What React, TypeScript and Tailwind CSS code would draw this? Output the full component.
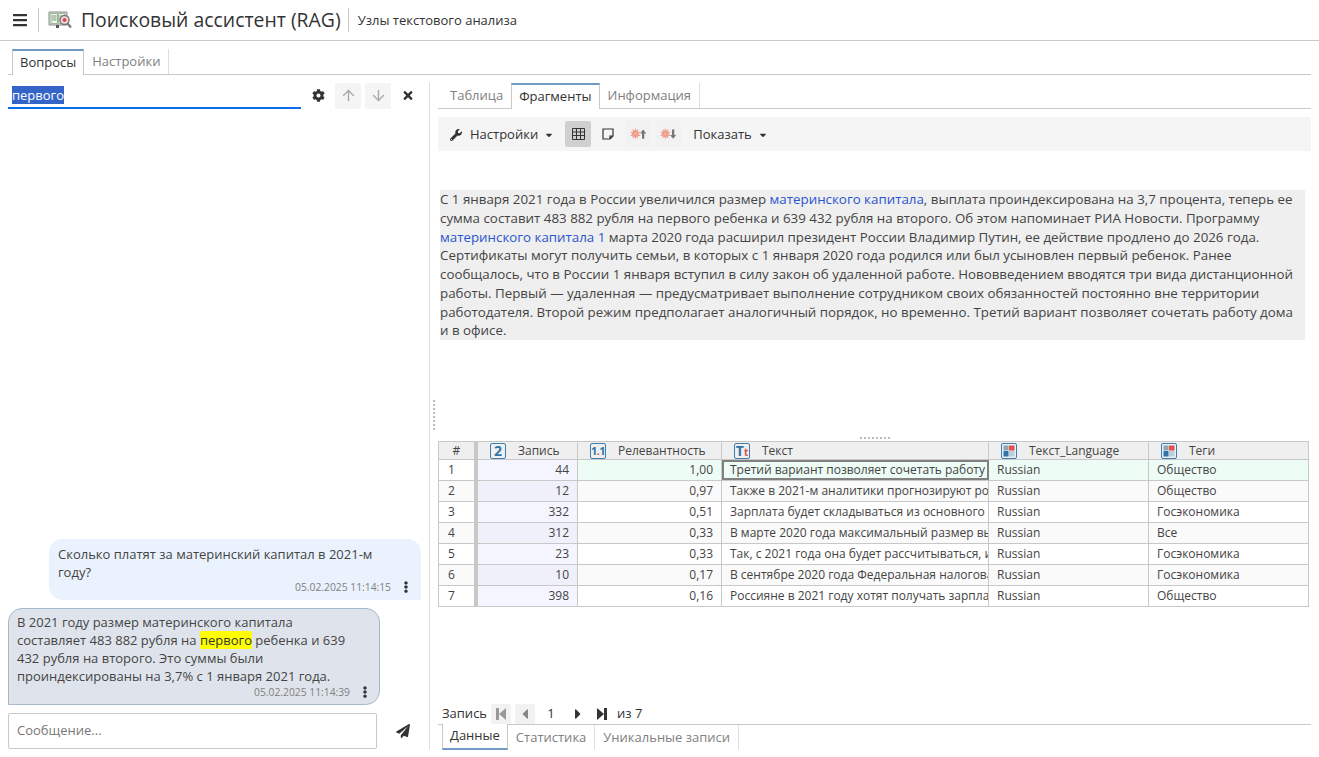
import { ArrowDown, ArrowUp } from "lucide-react";
import { FaBars, FaCog, FaTimes, FaWrench, FaPaperPlane, FaCaretDown, FaCaretLeft, FaCaretRight, FaEllipsisV } from "react-icons/fa";
import { ReactNode } from "react";

const rows = [
  ["1", "44", "1,00", "Третий вариант позволяет сочетать работу дома и в офисе.", "Russian", "Общество"],
  ["2", "12", "0,97", "Также в 2021-м аналитики прогнозируют рост зарплат в стране", "Russian", "Общество"],
  ["3", "332", "0,51", "Зарплата будет складываться из основного оклада и надбавок", "Russian", "Госэкономика"],
  ["4", "312", "0,33", "В марте 2020 года максимальный размер выплаты увеличился", "Russian", "Все"],
  ["5", "23", "0,33", "Так, с 2021 года она будет рассчитываться, исходя из дохода", "Russian", "Госэкономика"],
  ["6", "10", "0,17", "В сентябре 2020 года Федеральная налоговая служба сообщила", "Russian", "Госэкономика"],
  ["7", "398", "0,16", "Россияне в 2021 году хотят получать зарплату выше прежней", "Russian", "Общество"],
];

function Tab({ label, active, bottom, className }: { label: string; active?: boolean; bottom?: boolean; className?: string }) {
  if (active) {
    return (
      <div
        className={`h-[26px] px-[7px] flex items-center bg-white border-x border-[#c8c8c8] text-[#333] ${
          bottom ? "border-b-2 border-b-[#7399c6] -mt-px" : "border-t-2 border-t-[#7399c6] -mb-px"
        } ${className ?? ""}`}
      >
        {label}
      </div>
    );
  }
  return <div className="h-[25px] pl-[8px] pr-[8px] flex items-center border-r border-[#dedede] text-[#808080]">{label}</div>;
}

function ToolButton({ children, className }: { children: ReactNode; className?: string }) {
  return <div className={`w-[26px] h-[26px] rounded-[2px] flex items-center justify-center ${className ?? ""}`}>{children}</div>;
}

function ColumnIcon({ children }: { children: ReactNode }) {
  return (
    <span className="w-[16px] h-[16px] border border-[#3d7fb0] rounded-[2px] flex items-center justify-center text-[#2f74a8] font-bold leading-none">
      {children}
    </span>
  );
}

function ChartIcon() {
  return (
    <ColumnIcon>
      <svg width="12" height="12" viewBox="0 0 12 12">
        <rect x="0.5" y="0.5" width="5" height="5" fill="#8fa3b5" />
        <rect x="6" y="0.5" width="5.5" height="5" fill="#e2504a" />
        <rect x="0.5" y="6" width="5" height="5.5" fill="#2f74a8" />
        <rect x="6" y="6" width="5.5" height="5.5" fill="#b9cfe0" />
      </svg>
    </ColumnIcon>
  );
}

function HeaderCell({ icon, label, width }: { icon: ReactNode; label: string; width: string }) {
  return (
    <div className={`${width} h-full pl-[12px] flex items-center gap-[12px] border-r border-[#c8c8c8]`}>
      {icon}
      <span>{label}</span>
    </div>
  );
}

function Burst({ down }: { down?: boolean }) {
  return (
    <svg width="17" height="12.4" viewBox="0 0 22 16">
      <path
        d="M7 0l1.300 3.600L11 1.300 10.200 5l3.800-.2-3 2.700 3 2.700-3.800-.2.800 3.700-2.700-2.300L7 15l-1.300-3.600L3 13.700 3.800 10 0 10.200l3-2.700-3-2.700 3.800.2L3 1.300l2.700 2.300z"
        fill="#ee9c8c"
      />
      <circle cx="7" cy="7.500" r="1.800" fill="#f3b48a" />
      {down ? (
        <path d="M15.500 2h3v7H21l-4 5-4-5h2.500z" fill="#777" />
      ) : (
        <path d="M15.500 14h3V7H21l-4-5-4 5h2.500z" fill="#777" />
      )}
    </svg>
  );
}

function Kebab() {
  return <FaEllipsisV className="w-[10px] h-[12px] text-[#333]" />;
}

export default function App() {
  return (
    <div className="h-[757px] w-[1319px] overflow-hidden flex flex-col bg-white text-[13px] text-[#333] font-['Open_Sans',sans-serif]">
      {/* Header */}
      <header className="h-[41px] shrink-0 flex items-center border-b border-[#c8c8c8]">
        <FaBars className="ml-[12px] w-[16px] h-[16px] text-[#333]" />
        <div className="ml-[10px] w-px h-[24px] bg-[#c8c8c8]" />
        <svg className="ml-[9px]" width="24" height="22" viewBox="0 0 24 22">
          <path d="M1 3h18v13H1z" fill="#d9ddd9" stroke="#8b8f8b" />
          <path d="M3 4.500h6.500v10H3zM10.500 4.500H17v10h-6.500z" fill="#f2f7ef" stroke="#9fb59a" />
          <path d="M4 7h4.500M4 9h4.500M4 11h4.500M11.500 7H16M11.500 9h2" stroke="#6f9f6a" />
          <path d="M8 16h3v3H8z" fill="#555" />
          <circle cx="16.500" cy="11" r="4.500" fill="#f3dede" stroke="#777" strokeWidth="1.500" />
          <circle cx="16.500" cy="11" r="2" fill="#e0474c" />
          <path d="M19.500 14.500l3.500 4" stroke="#777" strokeWidth="2.200" />
        </svg>
        <span className="ml-[9px] text-[19.4px] leading-none">Поисковый ассистент (RAG)</span>
        <div className="ml-[7px] w-px h-[24px] bg-[#c8c8c8]" />
        <span className="ml-[9px] mt-[2px]">Узлы текстового анализа</span>
      </header>

      {/* Outer tabs */}
      <div className="mt-[8px] mx-[8px] h-[26px] shrink-0 flex items-end pl-[4px] border-b border-[#c8c8c8]">
        <Tab label="Вопросы" active />
        <Tab label="Настройки" />
      </div>

      <main className="flex-1 min-h-0 flex mt-[7px] mb-[7px]">
        {/* Chat panel */}
        <section className="w-[430px] shrink-0 flex flex-col border-r border-[#dedede] pl-[8px] pr-[8px]">
          <div className="h-[27px] flex items-center">
            <div className="w-[293px] h-[27px] border-b-2 border-[#0a6fe8] pl-[4px] flex items-center">
              <span className="bg-[#3464c8] text-white leading-[18px]">первого</span>
            </div>
            <FaCog className="ml-[11px] w-[13px] h-[13px] text-[#333]" />
            <ToolButton className="ml-[10px] bg-[#f5f5f5]"><ArrowUp className="w-[17px] h-[17px] text-[#aaa]" /></ToolButton>
            <ToolButton className="ml-[4px] bg-[#f5f5f5]"><ArrowDown className="w-[17px] h-[17px] text-[#aaa]" /></ToolButton>
            <FaTimes className="ml-[11px] w-[12px] h-[13px] text-[#333]" />
          </div>

          <div className="flex-1 min-h-0 flex flex-col justify-end">
            <div className="ml-[41px] w-[372px] h-[61px] bg-[#eaf2fd] rounded-l-[14px] rounded-tr-[14px] pl-[9px] pr-[10px] pt-[6px] leading-[18px]">
              <p className="text-[#444] pr-[20px]">Сколько платят за материнский капитал в 2021-м году?</p>
              <div className="-mt-[1px] flex justify-end items-center gap-[10px] text-[10.3px] leading-[14px] text-[#808080]">
                <span>05.02.2025 11:14:15</span>
                <Kebab />
              </div>
            </div>
            <div className="mt-[8px] w-[372px] h-[97px] bg-[#dfe4ec] border border-[#a8b8cc] rounded-[14px] rounded-bl-none pl-[8px] pr-[9px] pt-[4px] leading-[18px]">
              <p className="text-[#444] pr-[15px]">
                В 2021 году размер материнского капитала составляет 483 882 рубля на <mark className="bg-[#ffff00] text-[#333]">первого</mark> ребенка и 639 432 рубля на второго. Это суммы были проиндексированы на 3,7% с 1 января 2021 года.
              </p>
              <div className="flex justify-end items-center gap-[10px] text-[10.3px] leading-[14px] text-[#808080]">
                <span>05.02.2025 11:14:39</span>
                <Kebab />
              </div>
            </div>
            <div className="mt-[8px] mb-[1px] flex items-center">
              <div className="w-[369px] h-[36px] border border-[#c8c8c8] rounded-[2px] flex items-center pl-[8px] text-[#777]">Сообщение...</div>
              <FaPaperPlane className="ml-[19px] w-[14px] h-[14px] text-[#333]" />
            </div>
          </div>
        </section>

        {/* Right panel */}
        <section className="flex-1 min-w-0 flex flex-col pl-[8px] pr-[8px] pt-[1px]">
          <div className="h-[26px] shrink-0 flex items-end pl-[4px] border-b border-[#c8c8c8]">
            <Tab label="Таблица" />
            <Tab label="Фрагменты" active className="-ml-px" />
            <Tab label="Информация" />
          </div>

          <div className="mt-[8px] h-[34px] shrink-0 bg-[#f5f5f5] flex items-center pl-[12px]">
            <FaWrench className="mt-[2px] w-[12px] h-[12px] text-[#333]" />
            <span className="ml-[8px] mt-[2px]">Настройки</span>
            <FaCaretDown className="ml-[6px] mt-[2px] w-[10px] h-[10px]" />
            <ToolButton className="ml-[11px] bg-[#d0d0d0]">
              <svg width="13" height="12" viewBox="0 0 13 12" fill="none" stroke="#333">
                <path d="M.5.500h12v11H.500zM.500 4h12M.500 7.500h12M4.500.500v11M8.500.500v11" />
              </svg>
            </ToolButton>
            <ToolButton className="ml-[4px]">
              <svg width="12" height="12" viewBox="0 0 12 12" fill="none" stroke="#333" strokeWidth="1.200">
                <path d="M1 1h10v7l-3 3H1zM11 8H8v3" />
              </svg>
            </ToolButton>
            <ToolButton className="ml-[4px] bg-[#f2f2f2]"><Burst /></ToolButton>
            <ToolButton className="ml-[4px] bg-[#f2f2f2]"><Burst down /></ToolButton>
            <span className="ml-[12px] mt-[2px]">Показать</span>
            <FaCaretDown className="ml-[6px] mt-[2px] w-[10px] h-[10px]" />
          </div>

          <div className="h-[290px] shrink-0 pt-[39px] pl-[2px] pr-[6px] relative">
            <p className="bg-[#efefef] pr-[8px] text-[13.33px] leading-[18.75px] text-[#444]">
              С 1 января 2021 года в России увеличился размер <span className="text-[#2a55d0]">материнского капитала</span>, выплата проиндексирована на 3,7 процента, теперь ее сумма составит 483 882 рубля на первого ребенка и 639 432 рубля на второго. Об этом напоминает РИА Новости. Программу <span className="text-[#2a55d0]">материнского капитала 1</span> марта 2020 года расширил президент России Владимир Путин, ее действие продлено до 2026 года. Сертификаты могут получить семьи, в которых с 1 января 2020 года родился или был усыновлен первый ребенок. Ранее сообщалось, что в России 1 января вступил в силу закон об удаленной работе. Нововведением вводятся три вида дистанционной работы. Первый — удаленная — предусматривает выполнение сотрудником своих обязанностей постоянно вне территории работодателя. Второй режим предполагает аналогичный порядок, но временно. Третий вариант позволяет сочетать работу дома и в офисе.
            </p>
            <div className="absolute left-[422px] bottom-[2px] w-[30px] h-[3px] border-b-2 border-dotted border-[#bbb]" />
            <div className="absolute -left-[5px] bottom-[11px] w-[3px] h-[30px] border-l-2 border-dotted border-[#bbb]" />
          </div>

          {/* Grid */}
          <div className="w-[871px] shrink-0 border border-[#c8c8c8] border-b-0 text-[12px] text-[#444]">
            <div className="h-[18px] flex items-center bg-[#efefef] border-b border-[#c8c8c8] leading-none">
              <div className="w-[35px] text-center">#</div>
              <div className="w-[4px] h-full bg-[#c8c8c8]" />
              <HeaderCell icon={<ColumnIcon><span className="text-[14px]">2</span></ColumnIcon>} label="Запись" width="w-[100px]" />
              <HeaderCell
                icon={<ColumnIcon><span className="text-[11px] tracking-[-0.5px]">1<span className="text-[#e2504a]">.</span>1</span></ColumnIcon>}
                label="Релевантность"
                width="w-[144px]"
              />
              <HeaderCell icon={<ColumnIcon><span className="text-[14px]">T<span className="text-[10px] text-[#e2504a]">t</span></span></ColumnIcon>} label="Текст" width="w-[267px]" />
              <HeaderCell icon={<ChartIcon />} label="Текст_Language" width="w-[160px]" />
              <div className="flex-1 pl-[12px] flex items-center gap-[12px]"><ChartIcon /><span>Теги</span></div>
            </div>
            {rows.map((r, i) => (
              <div key={r[0]} className={`h-[21px] flex items-center border-b border-[#c8c8c8] ${i === 0 ? "bg-[#eefcf6]" : i % 2 ? "bg-[#fafafa]" : "bg-white"}`}>
                <div className={`w-[35px] h-full pl-[9px] flex items-center ${i === 0 ? "bg-white" : ""}`}>{r[0]}</div>
                <div className="w-[4px] h-full bg-[#c8c8c8]" />
                <div className={`w-[100px] h-full pr-[8px] flex items-center justify-end border-r border-[#c8c8c8] ${i % 2 ? "bg-[#f0f0fa]" : "bg-[#f5f5ff]"}`}>{r[1]}</div>
                <div className="w-[144px] h-full pr-[8px] flex items-center justify-end border-r border-[#c8c8c8]">{r[2]}</div>
                <div className={`w-[267px] h-full flex items-center overflow-hidden whitespace-nowrap ${i === 0 ? "border-2 border-[#808080] pl-[6px]" : "border-r border-[#c8c8c8] pl-[8px]"}`}>{r[3]}</div>
                <div className="w-[160px] h-full pl-[8px] flex items-center border-r border-[#c8c8c8]">{r[4]}</div>
                <div className="flex-1 pl-[8px]">{r[5]}</div>
              </div>
            ))}
          </div>

          {/* Pager */}
          <div className="mt-auto h-[20px] shrink-0 flex items-center pl-[4px]">
            <span>Запись</span>
            <ToolButton className="ml-[4px] !w-[20px] !h-[20px] bg-[#f2f2f2]">
              <svg width="10" height="12" viewBox="0 0 10 12"><path d="M0 0h3v12H0zM10 0v12L3 6z" fill="#999" /></svg>
            </ToolButton>
            <ToolButton className="ml-[4px] !w-[20px] !h-[20px] bg-[#f2f2f2]"><FaCaretLeft className="w-[16px] h-[16px] text-[#888]" /></ToolButton>
            <span className="ml-[12px] w-[8px] text-center">1</span>
            <FaCaretRight className="ml-[15px] w-[16px] h-[16px] text-[#333]" />
            <svg className="ml-[11px]" width="10" height="12" viewBox="0 0 10 12"><path d="M0 0l7 6-7 6zM7 0h3v12H7z" fill="#333" /></svg>
            <span className="ml-[10px]">из 7</span>
          </div>
          <div className="h-[26px] shrink-0 flex items-start pl-[4px] border-t border-[#c8c8c8]">
            <Tab label="Данные" active bottom />
            <Tab label="Статистика" />
            <Tab label="Уникальные записи" />
          </div>
        </section>
      </main>
    </div>
  );
}
